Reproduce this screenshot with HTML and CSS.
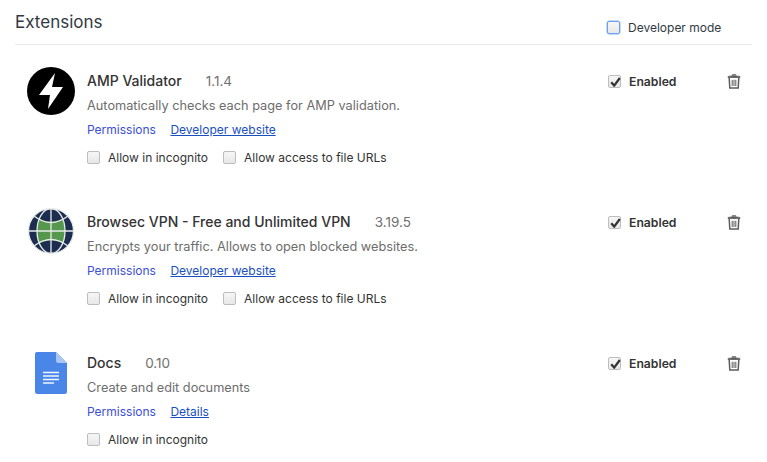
FILE: index.html
```html
<!DOCTYPE html>
<html lang="en">
<head>
<meta charset="utf-8">
<title>Extensions</title>
<link rel="stylesheet" href="styles.css">
</head>
<body>
<div class="page">
  <header class="head">
    <h1 class="title">Extensions</h1>
    <label class="devmode"><span class="box box-focus"></span><span>Developer mode</span></label>
  </header>

  <section class="ext">
    <div class="icon">
      <svg width="48" height="48" viewBox="0 0 48 48"><circle cx="24" cy="24" r="24" fill="#000"/><path d="M28 6 L12 28 H23 L21 42 L36 20 H25 Z" fill="#fff"/></svg>
    </div>
    <div class="main">
      <div class="name-line"><span class="name">AMP Validator</span><span class="version">1.1.4</span></div>
      <div class="desc">Automatically checks each page for AMP validation.</div>
      <div class="links"><a class="perm">Permissions</a><a class="site">Developer website</a></div>
      <div class="opts">
        <label class="opt"><span class="box"></span><span>Allow in incognito</span></label>
        <label class="opt"><span class="box"></span><span>Allow access to file URLs</span></label>
      </div>
    </div>
    <div class="side">
      <label class="enabled"><span class="box box-on"><svg class="tick" width="11" height="10" viewBox="0 0 11 10"><path d="M1.2 5.2 L4.2 8.6 L9.8 1" fill="none" stroke="#333" stroke-width="2.2"/></svg></span><span>Enabled</span></label>
      <svg class="trash" width="14" height="15" viewBox="0 0 14 15"><path d="M5.200 1.600 V.7 H8.800 V1.600 M1 2.600 C2.500 1.700 11.500 1.700 13 2.600 V3.500 H1 Z" fill="#5c5c5c" stroke="#5c5c5c" stroke-width=".8"/><path d="M2.200 3.800 L2.800 14 H11.200 L11.800 3.800" fill="none" stroke="#5c5c5c" stroke-width="1.500"/><path d="M5.200 5.800 V12 M7 5.800 V12 M8.800 5.800 V12" stroke="#5c5c5c" stroke-width="1"/></svg>
    </div>
  </section>

  <section class="ext">
    <div class="icon">
      <svg width="48" height="48" viewBox="0 0 48 48"><circle cx="24" cy="23" r="22.500" fill="#1d2d50"/><path d="M12.200 11 Q24 17 35.800 11 Q40.200 23 35.800 35 Q24 29 12.200 35 Q7.800 23 12.200 11 Z" fill="#55974c"/><g fill="none" stroke="#e8ecea" stroke-width="1.300"><circle cx="24" cy="23" r="22.500"/><ellipse cx="24" cy="23" rx="14" ry="22.500"/><path d="M24 .5 V45.500 M1.500 23 H46.500"/><path d="M7 8 Q24 21 41 8 M7 38 Q24 25 41 38"/></g></svg>
    </div>
    <div class="main">
      <div class="name-line"><span class="name">Browsec VPN - Free and Unlimited VPN</span><span class="version">3.19.5</span></div>
      <div class="desc">Encrypts your traffic. Allows to open blocked websites.</div>
      <div class="links"><a class="perm">Permissions</a><a class="site">Developer website</a></div>
      <div class="opts">
        <label class="opt"><span class="box"></span><span>Allow in incognito</span></label>
        <label class="opt"><span class="box"></span><span>Allow access to file URLs</span></label>
      </div>
    </div>
    <div class="side">
      <label class="enabled"><span class="box box-on"><svg class="tick" width="11" height="10" viewBox="0 0 11 10"><path d="M1.2 5.2 L4.2 8.6 L9.8 1" fill="none" stroke="#333" stroke-width="2.2"/></svg></span><span>Enabled</span></label>
      <svg class="trash" width="14" height="15" viewBox="0 0 14 15"><path d="M5.200 1.600 V.7 H8.800 V1.600 M1 2.600 C2.500 1.700 11.500 1.700 13 2.600 V3.500 H1 Z" fill="#5c5c5c" stroke="#5c5c5c" stroke-width=".8"/><path d="M2.200 3.800 L2.800 14 H11.200 L11.800 3.800" fill="none" stroke="#5c5c5c" stroke-width="1.500"/><path d="M5.200 5.800 V12 M7 5.800 V12 M8.800 5.800 V12" stroke="#5c5c5c" stroke-width="1"/></svg>
    </div>
  </section>

  <section class="ext">
    <div class="icon">
      <svg width="48" height="48" viewBox="0 0 48 48"><path d="M10 3 H29 L40 14 V42.500 a2.500 2.500 0 0 1 -2.500 2.500 H10.500 a2.500 2.500 0 0 1 -2.500 -2.500 V5 a2 2 0 0 1 2 -2 Z" fill="#4a86e8"/><path d="M29 3 L40 14 H31.500 a2.500 2.500 0 0 1 -2.500 -2.500 Z" fill="#a9c6f5"/><path d="M16 23.500 H32 M16 27 H32 M16 30.500 H32 M16 34 H27" stroke="#f1f5fd" stroke-width="1.500"/></svg>
    </div>
    <div class="main">
      <div class="name-line"><span class="name">Docs</span><span class="version">0.10</span></div>
      <div class="desc">Create and edit documents</div>
      <div class="links"><a class="perm">Permissions</a><a class="site">Details</a></div>
      <div class="opts">
        <label class="opt"><span class="box"></span><span>Allow in incognito</span></label>
      </div>
    </div>
    <div class="side">
      <label class="enabled"><span class="box box-on"><svg class="tick" width="11" height="10" viewBox="0 0 11 10"><path d="M1.2 5.2 L4.2 8.6 L9.8 1" fill="none" stroke="#333" stroke-width="2.2"/></svg></span><span>Enabled</span></label>
      <svg class="trash" width="14" height="15" viewBox="0 0 14 15"><path d="M5.200 1.600 V.7 H8.800 V1.600 M1 2.600 C2.500 1.700 11.500 1.700 13 2.600 V3.500 H1 Z" fill="#5c5c5c" stroke="#5c5c5c" stroke-width=".8"/><path d="M2.200 3.800 L2.800 14 H11.200 L11.800 3.800" fill="none" stroke="#5c5c5c" stroke-width="1.500"/><path d="M5.200 5.800 V12 M7 5.800 V12 M8.800 5.800 V12" stroke="#5c5c5c" stroke-width="1"/></svg>
    </div>
  </section>
</div>
</body>
</html>
```
FILE: styles.css
```css
* { box-sizing: border-box; }
html, body { margin: 0; padding: 0; height: 100%; overflow: hidden; background: #fff; }
body { font-family: "Inter", "Liberation Sans", sans-serif; font-size: 12px; color: #303942; }
.page { width: 767px; padding: 0 15px; }
.head { height: 45px; width: 737px; display: flex; align-items: flex-end; justify-content: space-between; border-bottom: 1px solid #eaeaea; padding-bottom: 9px; }
.title { margin: 0; font-size: 17px; font-weight: 400; line-height: 20px; color: #303942; position: relative; top: -3px; }
.devmode { display: flex; align-items: center; gap: 8px; margin-right: 2px; width: 143px; }
.box { display: block; width: 13px; height: 13px; flex: none; border: 1px solid #bdbdbd; border-radius: 2px; background: linear-gradient(#f6f6f6, #e8e8e8); position: relative; }
.box-focus { border-color: #6ea2ee; box-shadow: 0 0 0 .5px #8db6f2; }
.box-on { border-color: #bdbdbd; }
.tick { position: absolute; left: 1px; top: 1px; }
.ext { height: 141px; display: flex; padding-top: 22px; }
.icon { width: 72px; padding-left: 12px; flex: none; }
.icon svg { display: block; }
.main { width: 521px; flex: none; padding-top: 2px; }
.name-line { display: flex; height: 25px; align-items: baseline; }
.name { font-size: 14px; line-height: 24px; font-weight: 500; color: #333; margin-right: 24px; }
.version { font-size: 13.5px; color: #707070; }
.desc { font-size: 12.75px; line-height: 24px; color: #6d6d6d; }
.links { display: flex; gap: 14.5px; line-height: 24px; height: 25px; font-size: 12px; }
.perm { color: #3b4fd8; }
.site { color: #1a4fc0; text-decoration: underline; }
.opts { display: flex; gap: 15px; margin-top: 7px; }
.opt { display: flex; align-items: center; gap: 8px; color: #333; }
.side { display: flex; width: 133px; margin-top: 2px; height: 24px; align-items: center; justify-content: space-between; flex: none; }
.enabled { display: flex; align-items: center; gap: 8px; font-size: 12.2px; font-weight: 600; color: #333; }
.trash { display: block; margin-right: 0; }
```
